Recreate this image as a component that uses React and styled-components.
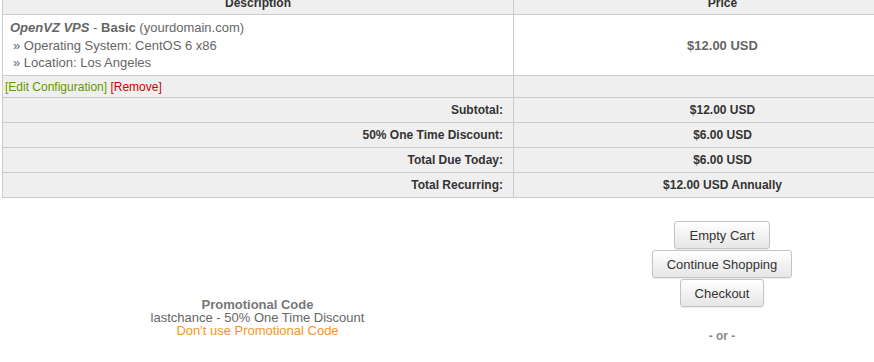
import React from 'react';
import styled, { createGlobalStyle } from 'styled-components';

const GlobalStyle = createGlobalStyle`
    html, body {
        margin: 0;
        padding: 0;
        background: #fff;
        overflow: hidden;
    }

    body {
        font-family: "Liberation Sans", Arial, sans-serif;
        font-size: 12px;
        color: #333;
    }
`;

const StyledPage = styled.div`
    width: 930px;
    margin: -8px 0 0 2px;
`;

const StyledTable = styled.table`
    width: 100%;
    border-collapse: collapse;
    border: 1px solid #ccc;
    border-top: none;
    table-layout: fixed;
`;

const StyledHeadCell = styled.th`
    background: #efefef;
    height: 22px;
    padding: 0;
    font-size: 12px;
    font-weight: bold;
    color: #333;
    text-align: center;
    border: 1px solid #ccc;
    border-top: none;
`;

const StyledCell = styled.td`
    background: ${({ light }) => (light ? '#fff' : '#efefef')};
    border: 1px solid #ccc;
    padding: ${({ padded }) => (padded ? '4px 7px 4px' : '0 10px')};
    height: ${({ tall }) => (tall ? '49px' : '24px')};
    text-align: ${({ align }) => align || 'left'};
    vertical-align: middle;
    font-size: ${({ large }) => (large ? '13px' : '12px')};
    font-weight: ${({ bold }) => (bold ? 'bold' : 'normal')};
    color: ${({ muted }) => (muted ? '#666' : '#333')};
    line-height: 17px;
`;

const StyledProduct = styled.div`
    color: #666;
    font-size: 13px;
    line-height: 18px;

    em {
        font-weight: bold;
    }
`;

const StyledOption = styled.div`
    color: #666;
    font-size: 13px;
    padding-left: 3px;
    line-height: 17px;
`;

const StyledLink = styled.a`
    color: ${({ danger }) => (danger ? '#cc0000' : '#669900')};
    text-decoration: none;
`;

const StyledLinksCell = styled.td`
    background: #efefef;
    border: 1px solid #ccc;
    height: 21px;
    padding: 0 2px;
    font-size: 12px;
`;

const StyledBottom = styled.div`
    display: flex;
    padding-top: 23px;
`;

const StyledPromo = styled.div`
    width: 511px;
    padding-top: 77px;
    text-align: center;
    font-size: 13px;
    color: #666;
    line-height: 13px;
`;

const StyledPromoTitle = styled.div`
    font-size: 13px;
    font-weight: bold;
    color: #777;
`;

const StyledPromoLink = styled.a`
    color: #f7941d;
    text-decoration: none;
`;

const StyledActions = styled.div`
    width: 418px;
    display: flex;
    flex-direction: column;
    align-items: center;
    gap: 1px;
`;

const StyledButton = styled.button`
    font-family: inherit;
    font-size: 13px;
    color: #333;
    height: 28px;
    padding: 0 14px;
    background: linear-gradient(#fff, #e6e6e6);
    border: 1px solid #c4c4c4;
    border-radius: 3px;
    box-shadow: 0 1px 1px rgba(0, 0, 0, 0.08);
    cursor: pointer;
`;

const StyledOr = styled.div`
    margin-top: 21px;
    font-weight: bold;
    color: #888;
`;

const summary = [
    ['Subtotal:', '$12.00 USD'],
    ['50% One Time Discount:', '$6.00 USD'],
    ['Total Due Today:', '$6.00 USD'],
    ['Total Recurring:', '$12.00 USD Annually'],
];

const App = () => (
    <StyledPage>
        <GlobalStyle />
        <StyledTable>
            <colgroup>
                <col style={{ width: '511px' }} />
                <col />
            </colgroup>
            <thead>
                <tr>
                    <StyledHeadCell>Description</StyledHeadCell>
                    <StyledHeadCell>Price</StyledHeadCell>
                </tr>
            </thead>
            <tbody>
                <tr>
                    <StyledCell light padded tall>
                        <StyledProduct>
                            <em>OpenVZ VPS</em> - <b>Basic</b> (yourdomain.com)
                        </StyledProduct>
                        <StyledOption>» Operating System: CentOS 6 x86</StyledOption>
                        <StyledOption>» Location: Los Angeles</StyledOption>
                    </StyledCell>
                    <StyledCell light align="center" bold muted large>
                        $12.00 USD
                    </StyledCell>
                </tr>
                <tr>
                    <StyledLinksCell>
                        <StyledLink href="#">[Edit Configuration]</StyledLink>{' '}
                        <StyledLink href="#" danger>
                            [Remove]
                        </StyledLink>
                    </StyledLinksCell>
                    <StyledLinksCell />
                </tr>
                {summary.map(([label, value]) => (
                    <tr key={label}>
                        <StyledCell align="right" bold>
                            {label}
                        </StyledCell>
                        <StyledCell align="center" bold>
                            {value}
                        </StyledCell>
                    </tr>
                ))}
            </tbody>
        </StyledTable>
        <StyledBottom>
            <StyledPromo>
                <StyledPromoTitle>Promotional Code</StyledPromoTitle>
                <div>lastchance - 50% One Time Discount</div>
                <StyledPromoLink href="#">Don't use Promotional Code</StyledPromoLink>
            </StyledPromo>
            <StyledActions>
                <StyledButton>Empty Cart</StyledButton>
                <StyledButton>Continue Shopping</StyledButton>
                <StyledButton>Checkout</StyledButton>
                <StyledOr>- or -</StyledOr>
            </StyledActions>
        </StyledBottom>
    </StyledPage>
);

export default App;
